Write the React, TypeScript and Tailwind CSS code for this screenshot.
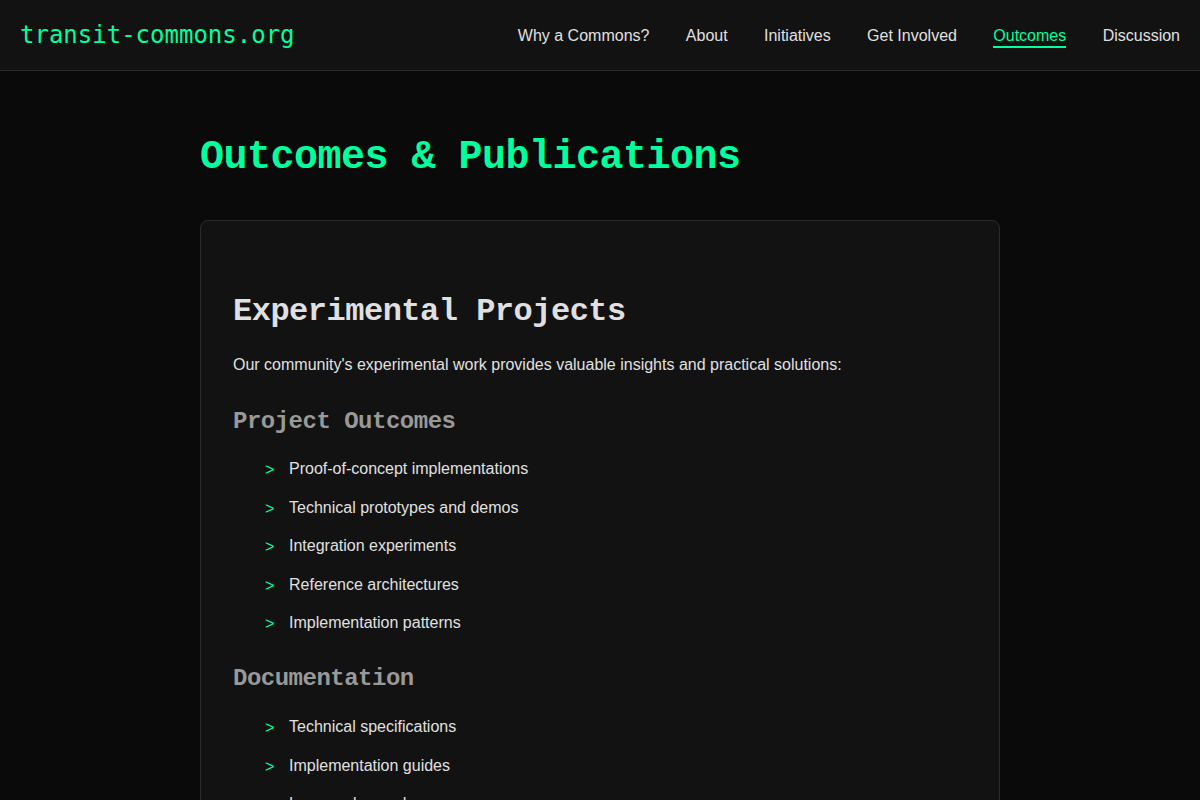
const navLinks = [
  "Why a Commons?",
  "About",
  "Initiatives",
  "Get Involved",
  "Outcomes",
  "Discussion",
];

const sections = [
  {
    title: "Project Outcomes",
    items: [
      "Proof-of-concept implementations",
      "Technical prototypes and demos",
      "Integration experiments",
      "Reference architectures",
      "Implementation patterns",
    ],
  },
  {
    title: "Documentation",
    items: [
      "Technical specifications",
      "Implementation guides",
      "Lessons learned",
      "Best practices",
    ],
  },
];

const Header = () => (
  <header className="h-[71px] bg-[#121212] border-b border-[#2a2a2a] px-5 flex items-center justify-between">
    <a className="text-[24px] text-[#00ff9d] font-['DejaVu_Sans_Mono',monospace]">
      transit-commons.org
    </a>
    <nav className="flex items-center gap-[36.4px] font-['Liberation_Sans',Arial,sans-serif] text-[16px]">
      {navLinks.map((link) => (
        <a
          key={link}
          className={
            link === "Outcomes"
              ? "text-[#00ff9d] border-b-2 border-[#00ff9d] leading-[20px] pt-[4px]"
              : "text-[#e0e0e0] leading-[20px] pt-[4px] border-b-2 border-transparent"
          }
        >
          {link}
        </a>
      ))}
    </nav>
  </header>
);

export default function App() {
  return (
    <div className="min-h-screen bg-[#0a0a0a] font-['Liberation_Sans',Arial,sans-serif] text-[#e0e0e0]">
      <Header />
      <main className="w-[800px] mx-auto pt-[63px] pb-10">
        <h1 className="font-['Liberation_Mono',monospace] font-bold text-[40px] leading-[48px] tracking-[-0.5px] text-[#00ff9d]">
          Outcomes &amp; Publications
        </h1>
        <div className="mt-[38px] bg-[#121212] border border-[#2a2a2a] rounded-lg px-8 pt-[72px] pb-8">
          <h2 className="font-['Liberation_Mono',monospace] font-bold text-[32px] leading-[38px] tracking-[-0.5px] text-[#e0e0e0]">
            Experimental Projects
          </h2>
          <p className="mt-[21px] text-[16px] leading-[26px] text-[#e0e0e0]">
            Our community's experimental work provides valuable insights and
            practical solutions:
          </p>
          {sections.map((section, i) => (
            <section key={section.title} className={i === 0 ? "mt-[29px]" : "mt-[22px]"}>
              <h3 className="font-['Liberation_Mono',monospace] font-bold text-[24px] leading-[29px] tracking-[-0.5px] text-[#999999]">
                {section.title}
              </h3>
              <ul className={i === 0 ? "mt-[14px] pl-8" : "mt-[15px] pl-8"}>
                {section.items.map((item) => (
                  <li key={item} className="flex items-start py-[6.4px] text-[16px]">
                    <span className="w-6 h-[25.6px] shrink-0 leading-[30px] text-[#00ff9d] font-['Liberation_Mono',monospace]">
                      &gt;
                    </span>
                    <span className="h-[25.6px] leading-[25.6px]">{item}</span>
                  </li>
                ))}
              </ul>
            </section>
          ))}
        </div>
      </main>
    </div>
  );
}
